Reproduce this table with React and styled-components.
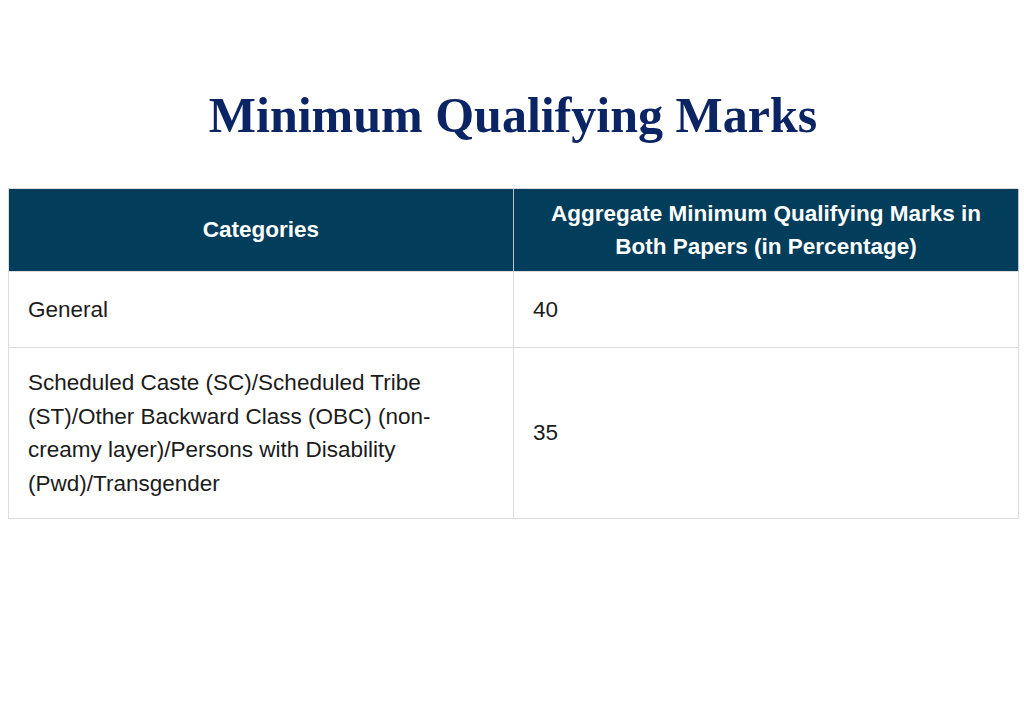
import styled, { createGlobalStyle } from 'styled-components'

const rows = [
    { category: 'General', marks: '40', minHeight: 76 },
    {
        category: 'Scheduled Caste (SC)/Scheduled Tribe (ST)/Other Backward Class (OBC) (non-creamy layer)/Persons with Disability (Pwd)/Transgender',
        marks: '35',
        minHeight: 171,
    },
]

export default function App() {
    return (
        <Pagina>
            <GlobalStyle />
            <Titulo>Minimum Qualifying Marks</Titulo>
            <Tabela>
                <Cabecalho>Categories</Cabecalho>
                <Cabecalho>Aggregate Minimum Qualifying Marks in Both Papers (in Percentage)</Cabecalho>
                {rows.map(linha => (
                    <Linha key={linha.marks}>
                        <Celula $minHeight={linha.minHeight}>{linha.category}</Celula>
                        <Celula $minHeight={linha.minHeight}>{linha.marks}</Celula>
                    </Linha>
                ))}
            </Tabela>
        </Pagina>
    )
}

const GlobalStyle = createGlobalStyle`
body{
    margin: 0;
    background: #ffffff;
}
`

const Pagina = styled.div`
width: 1024px;
height: 708px;
box-sizing: border-box;
padding: 84px 6px 0 8px;
background: #ffffff;
`

const Titulo = styled.h1`
margin: 0 0 42px;
text-align: center;
font-family: "Liberation Serif", "Times New Roman", serif;
font-weight: bold;
font-size: 50px;
line-height: 62px;
color: #0b2463;
`

const Tabela = styled.div`
display: grid;
grid-template-columns: 505px 505px;
border-top: 1px solid #dcdcdc;
border-left: 1px solid #dcdcdc;
font-family: "Liberation Sans", Arial, sans-serif;
font-size: 22.5px;
line-height: 33.5px;
`

const Linha = styled.div`
display: contents;
`

const Cabecalho = styled.div`
min-height: 83px;
box-sizing: border-box;
display: flex;
align-items: center;
justify-content: center;
padding: 0 20px;
text-align: center;
background: #023d5c;
color: #ffffff;
font-weight: bold;
border-right: 1px solid #b9c3ca;
border-bottom: 1px solid #dcdcdc;
&:last-of-type{
    border-right: 1px solid #dcdcdc;
}
`

const Celula = styled.div`
min-height: ${props => props.$minHeight}px;
box-sizing: border-box;
display: flex;
align-items: center;
padding: 0 19px;
color: #1b1b1b;
border-right: 1px solid #dcdcdc;
border-bottom: 1px solid #dcdcdc;
`
